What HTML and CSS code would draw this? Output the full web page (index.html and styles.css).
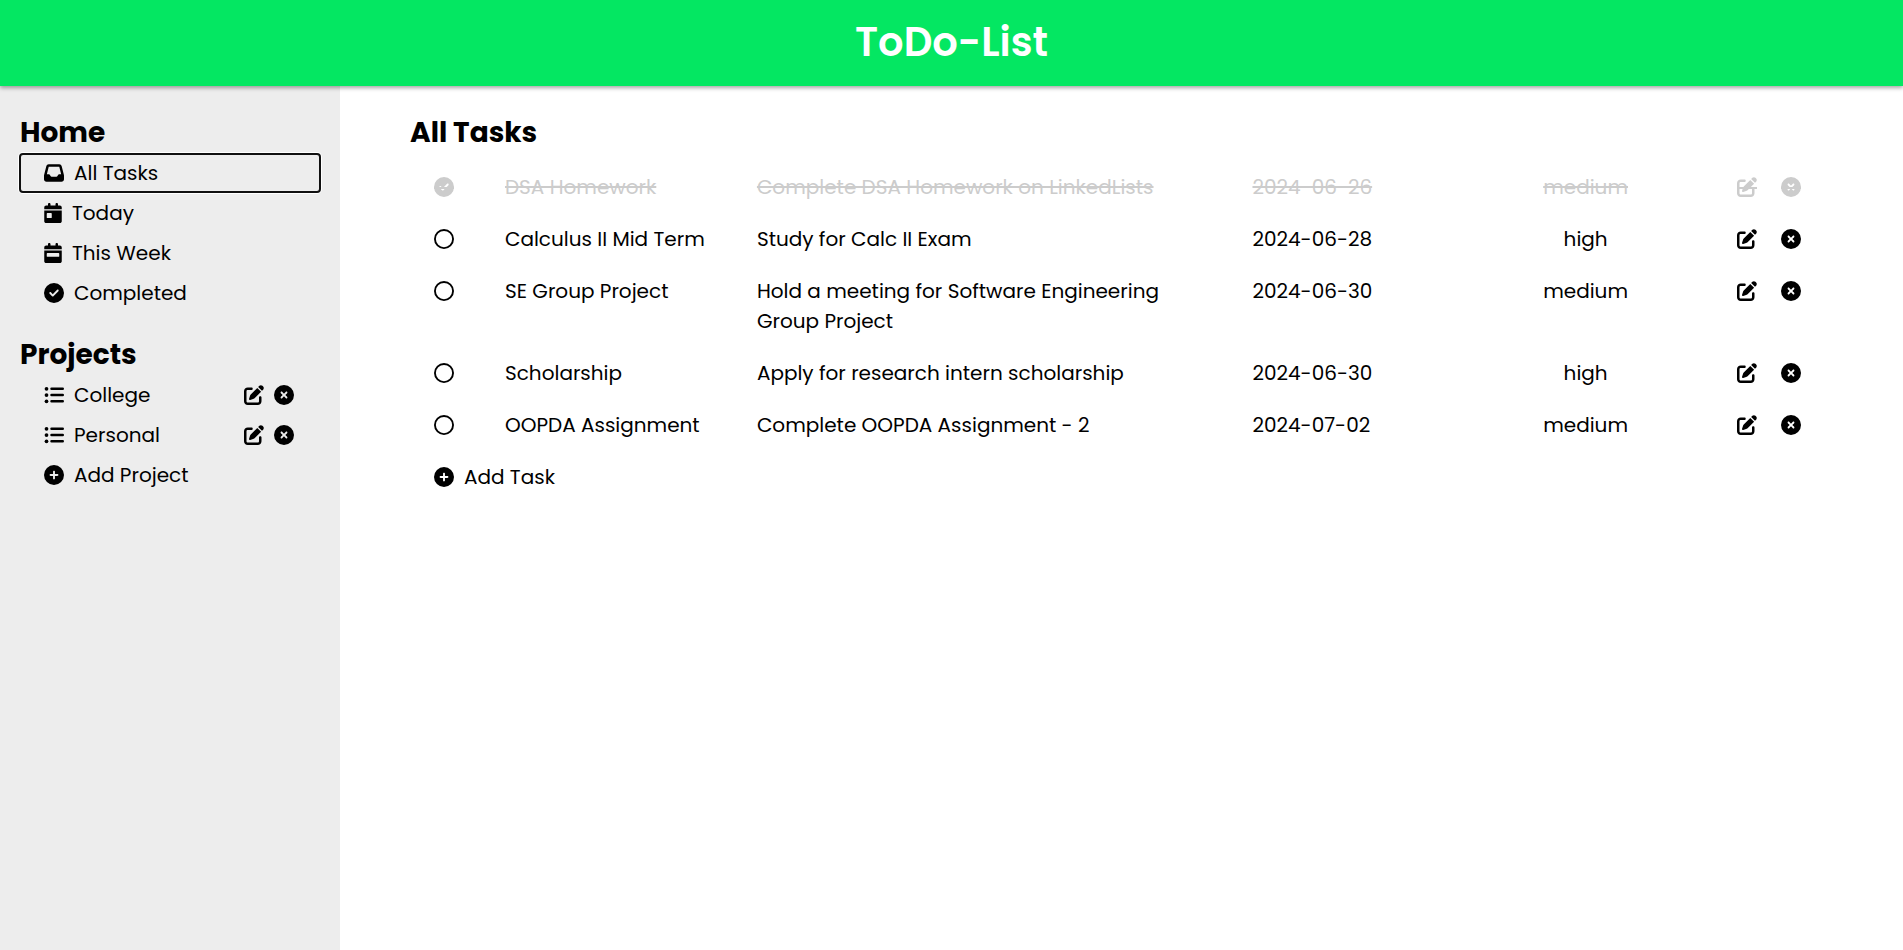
FILE: index.html
```html
<!DOCTYPE html>
<html lang="en">
<head>
<meta charset="utf-8">
<meta name="viewport" content="width=device-width, initial-scale=1">
<title>ToDo-List</title>
<link rel="stylesheet" href="styles.css">
</head>
<body>
<svg class="sprite" aria-hidden="true">
  <symbol id="inbox" viewBox="0 0 512 512"><path d="M121 32C91.6 32 66 52 58.9 80.5L1.9 308.4C.6 313.5 0 318.7 0 323.9V416c0 35.3 28.7 64 64 64H448c35.3 0 64-28.7 64-64V323.9c0-5.2-.6-10.4-1.9-15.5l-57-227.9C446 52 420.4 32 391 32H121zm0 64H391l48 192H387.8c-12.1 0-23.2 6.8-28.6 17.7l-14.3 28.6c-5.4 10.8-16.5 17.7-28.6 17.7H195.8c-12.1 0-23.2-6.8-28.6-17.7l-14.3-28.6c-5.4-10.8-16.5-17.7-28.6-17.7H73L121 96z"/></symbol>
  <symbol id="day" viewBox="0 0 448 512"><path d="M128 0c17.7 0 32 14.3 32 32V64H288V32c0-17.7 14.3-32 32-32s32 14.3 32 32V64h48c26.5 0 48 21.5 48 48v48H0V112C0 85.5 21.5 64 48 64H96V32c0-17.7 14.3-32 32-32zM0 192H448V464c0 26.5-21.5 48-48 48H48c-26.5 0-48-21.5-48-48V192zm80 64c-8.800 0-16 7.200-16 16v96c0 8.800 7.200 16 16 16h96c8.800 0 16-7.200 16-16V272c0-8.800-7.200-16-16-16H80z"/></symbol>
  <symbol id="week" viewBox="0 0 448 512"><path d="M128 0c17.7 0 32 14.3 32 32V64H288V32c0-17.7 14.3-32 32-32s32 14.3 32 32V64h48c26.5 0 48 21.5 48 48v48H0V112C0 85.5 21.5 64 48 64H96V32c0-17.7 14.3-32 32-32zM0 192H448V464c0 26.5-21.5 48-48 48H48c-26.5 0-48-21.5-48-48V192zm80 64c-8.800 0-16 7.200-16 16v64c0 8.800 7.200 16 16 16H368c8.800 0 16-7.200 16-16V272c0-8.800-7.200-16-16-16H80z"/></symbol>
  <symbol id="check" viewBox="0 0 512 512"><path d="M256 512A256 256 0 1 0 256 0a256 256 0 1 0 0 512zM369 209L241 337c-9.4 9.4-24.6 9.4-33.9 0l-64-64c-9.4-9.4-9.4-24.6 0-33.9s24.6-9.4 33.9 0l47 47L335 175c9.4-9.4 24.6-9.4 33.9 0s9.4 24.6 0 33.9z"/></symbol>
  <symbol id="circle" viewBox="0 0 512 512"><circle cx="256" cy="256" r="232" fill="none" stroke="currentColor" stroke-width="48"/></symbol>
  <symbol id="close" viewBox="0 0 512 512"><path d="M256 512A256 256 0 1 0 256 0a256 256 0 1 0 0 512zM175 175c9.4-9.4 24.6-9.4 33.9 0l47 47 47-47c9.4-9.4 24.6-9.4 33.9 0s9.4 24.6 0 33.9l-47 47 47 47c9.4 9.4 9.4 24.6 0 33.9s-24.6 9.4-33.9 0l-47-47-47 47c-9.4 9.4-24.6 9.4-33.9 0s-9.4-24.6 0-33.9l47-47-47-47c-9.4-9.4-9.4-24.6 0-33.9z"/></symbol>
  <symbol id="plus" viewBox="0 0 512 512"><path d="M256 512A256 256 0 1 0 256 0a256 256 0 1 0 0 512zM232 344V280H168c-13.3 0-24-10.7-24-24s10.7-24 24-24h64V168c0-13.3 10.7-24 24-24s24 10.7 24 24v64h64c13.3 0 24 10.7 24 24s-10.7 24-24 24H280v64c0 13.3-10.7 24-24 24s-24-10.7-24-24z"/></symbol>
  <symbol id="list" viewBox="0 0 512 512"><circle cx="64" cy="96" r="48"/><circle cx="64" cy="256" r="48"/><circle cx="64" cy="416" r="48"/><path d="M192 96H480M192 256H480M192 416H480" fill="none" stroke="currentColor" stroke-width="64" stroke-linecap="round"/></symbol>
  <symbol id="edit" viewBox="0 0 512 512"><path d="M471.6 21.7c-21.9-21.9-57.3-21.9-79.2 0L362.3 51.7l97.9 97.9 30.1-30.1c21.9-21.9 21.9-57.3 0-79.2L471.6 21.7zm-299.2 220c-6.1 6.1-10.8 13.6-13.5 21.9l-29.6 88.8c-2.9 8.6-.6 18.1 5.8 24.6s15.9 8.7 24.6 5.8l88.8-29.6c8.2-2.7 15.7-7.4 21.9-13.5L437.7 172.3 339.7 74.3 172.4 241.7zM96 64C43 64 0 107 0 160V416c0 53 43 96 96 96H352c53 0 96-43 96-96V320c0-17.7-14.3-32-32-32s-32 14.3-32 32v96c0 17.7-14.3 32-32 32H96c-17.7 0-32-14.3-32-32V160c0-17.7 14.3-32 32-32h96c17.7 0 32-14.3 32-32s-14.3-32-32-32H96z"/></symbol>
  <symbol id="strike" viewBox="0 0 512 512"><path d="M0 256H512V307H0z"/></symbol>
</svg>

<header class="header"><h1 class="brand">ToDo-List</h1></header>

<div class="layout">
  <aside class="sidebar">
    <nav class="group" aria-labelledby="home-title">
      <h2 class="heading" id="home-title">Home</h2>
      <button class="item item-active" type="button"><svg class="icon"><use href="#inbox"/></svg>All Tasks</button>
      <button class="item" type="button"><svg class="icon icon-narrow"><use href="#day"/></svg>Today</button>
      <button class="item" type="button"><svg class="icon icon-narrow"><use href="#week"/></svg>This Week</button>
      <button class="item" type="button"><svg class="icon"><use href="#check"/></svg>Completed</button>
    </nav>
    <nav class="group" aria-labelledby="projects-title">
      <h2 class="heading" id="projects-title">Projects</h2>
      <div class="project">
        <button class="item" type="button"><svg class="icon"><use href="#list"/></svg>College</button>
        <button class="action" type="button" aria-label="Edit College"><svg class="icon"><use href="#edit"/></svg></button>
        <button class="action" type="button" aria-label="Delete College"><svg class="icon"><use href="#close"/></svg></button>
      </div>
      <div class="project">
        <button class="item" type="button"><svg class="icon"><use href="#list"/></svg>Personal</button>
        <button class="action" type="button" aria-label="Edit Personal"><svg class="icon"><use href="#edit"/></svg></button>
        <button class="action" type="button" aria-label="Delete Personal"><svg class="icon"><use href="#close"/></svg></button>
      </div>
      <button class="item" type="button"><svg class="icon"><use href="#plus"/></svg>Add Project</button>
    </nav>
  </aside>

  <main class="main">
    <h2 class="heading">All Tasks</h2>
    <div class="tasks">
      <table class="table">
        <colgroup><col class="col-check"><col class="col-title"><col class="col-desc"><col class="col-date"><col class="col-priority"><col class="col-action"><col class="col-action"></colgroup>
        <tbody>
          <tr class="done">
            <td><label class="check"><input class="check-input" type="checkbox" checked aria-label="DSA Homework done"><svg class="icon"><use href="#check"/><use href="#strike"/></svg></label></td>
            <td>DSA Homework</td><td class="desc">Complete DSA Homework on LinkedLists</td><td>2024-06-26</td><td class="priority">medium</td>
            <td><button class="action" type="button" aria-label="Edit task"><svg class="icon"><use href="#edit"/><use href="#strike"/></svg></button></td>
            <td><button class="action" type="button" aria-label="Delete task"><svg class="icon"><use href="#close"/><use href="#strike"/></svg></button></td>
          </tr>
          <tr>
            <td><label class="check"><input class="check-input" type="checkbox" aria-label="Calculus II Mid Term done"><svg class="icon"><use href="#circle"/></svg></label></td>
            <td>Calculus II Mid Term</td><td class="desc">Study for Calc II Exam</td><td>2024-06-28</td><td class="priority">high</td>
            <td><button class="action" type="button" aria-label="Edit task"><svg class="icon"><use href="#edit"/></svg></button></td>
            <td><button class="action" type="button" aria-label="Delete task"><svg class="icon"><use href="#close"/></svg></button></td>
          </tr>
          <tr>
            <td><label class="check"><input class="check-input" type="checkbox" aria-label="SE Group Project done"><svg class="icon"><use href="#circle"/></svg></label></td>
            <td>SE Group Project</td><td class="desc">Hold a meeting for Software Engineering Group Project</td><td>2024-06-30</td><td class="priority">medium</td>
            <td><button class="action" type="button" aria-label="Edit task"><svg class="icon"><use href="#edit"/></svg></button></td>
            <td><button class="action" type="button" aria-label="Delete task"><svg class="icon"><use href="#close"/></svg></button></td>
          </tr>
          <tr>
            <td><label class="check"><input class="check-input" type="checkbox" aria-label="Scholarship done"><svg class="icon"><use href="#circle"/></svg></label></td>
            <td>Scholarship</td><td class="desc">Apply for research intern scholarship</td><td>2024-06-30</td><td class="priority">high</td>
            <td><button class="action" type="button" aria-label="Edit task"><svg class="icon"><use href="#edit"/></svg></button></td>
            <td><button class="action" type="button" aria-label="Delete task"><svg class="icon"><use href="#close"/></svg></button></td>
          </tr>
          <tr>
            <td><label class="check"><input class="check-input" type="checkbox" aria-label="OOPDA Assignment done"><svg class="icon"><use href="#circle"/></svg></label></td>
            <td>OOPDA Assignment</td><td class="desc">Complete OOPDA Assignment - 2</td><td>2024-07-02</td><td class="priority">medium</td>
            <td><button class="action" type="button" aria-label="Edit task"><svg class="icon"><use href="#edit"/></svg></button></td>
            <td><button class="action" type="button" aria-label="Delete task"><svg class="icon"><use href="#close"/></svg></button></td>
          </tr>
        </tbody>
      </table>
      <button class="add-task" type="button"><svg class="icon"><use href="#plus"/></svg>Add Task</button>
    </div>
  </main>
</div>
</body>
</html>
```
FILE: styles.css
```css
*,
*::before,
*::after {
  box-sizing: border-box;
}

body {
  display: flex;
  flex-direction: column;
  min-height: 100vh;
  margin: 0;
  background: #fff;
  color: #000;
  font-family: Poppins, Inter, sans-serif;
  font-size: 20px;
  line-height: 30px;
}

.sprite {
  display: none;
}

.header {
  position: relative;
  z-index: 1;
  padding: 12px 20px 14px;
  background: #04e762;
  box-shadow: 0 2px 4px rgba(0, 0, 0, 0.35);
  color: #fff;
  text-align: center;
}

.brand {
  margin: 0;
  font-size: 40px;
  font-weight: 600;
  line-height: 60px;
}

.layout {
  display: flex;
  flex: 1;
}

.sidebar {
  display: flex;
  flex: 0 0 340px;
  flex-direction: column;
  gap: 20px;
  padding: 26px 20px;
  background: #ededed;
}

.group {
  display: flex;
  flex-direction: column;
}

.heading {
  margin: 0;
  font-size: 28px;
  font-weight: 700;
  line-height: 42px;
}

button {
  border: 0;
  background: none;
  color: inherit;
  font: inherit;
  cursor: pointer;
}

.item {
  display: flex;
  flex: 1;
  align-items: center;
  gap: 10px;
  margin-bottom: 2px;
  padding: 4px 24px;
  border-radius: 3px;
  text-align: left;
}

.item-active {
  outline: 2px solid #101010;
  outline-offset: -1px;
  box-shadow: 0 0 0 2px #fff;
}

.project {
  display: flex;
  align-items: center;
  gap: 10px;
  padding-right: 26px;
}

.project .item {
  padding-right: 0;
}

.project .action {
  padding-bottom: 2px;
}

.icon {
  display: block;
  flex: none;
  width: 20px;
  height: 20px;
  fill: currentColor;
}

.icon-narrow {
  width: 18px;
}

.action {
  display: block;
  padding: 0;
}

.main {
  flex: 1;
  min-width: 0;
  padding: 26px 70px;
}

.tasks {
  padding: 7px 17px 0 14px;
}

.table {
  width: 100%;
  table-layout: fixed;
  border-collapse: collapse;
}

.col-check { width: 5.1%; }
.col-title { width: 18.1%; }
.col-desc { width: 35.6%; }
.col-date { width: 14.5%; }
.col-priority { width: 20.3%; }
.col-action { width: 3.2%; }

td {
  padding: 11px 10px;
  vertical-align: top;
}

.table .desc {
  padding-right: 40px;
}

.table .priority {
  text-align: center;
}

.table .action,
.check {
  display: flex;
  align-items: center;
  height: 30px;
}

.check {
  position: relative;
  cursor: pointer;
}

.check-input {
  position: absolute;
  width: 20px;
  height: 20px;
  margin: 0;
  opacity: 0;
}

.done {
  color: #ccc;
  text-decoration: line-through;
}

.add-task {
  display: flex;
  align-items: center;
  gap: 10px;
  padding: 11px 10px;
}
```
